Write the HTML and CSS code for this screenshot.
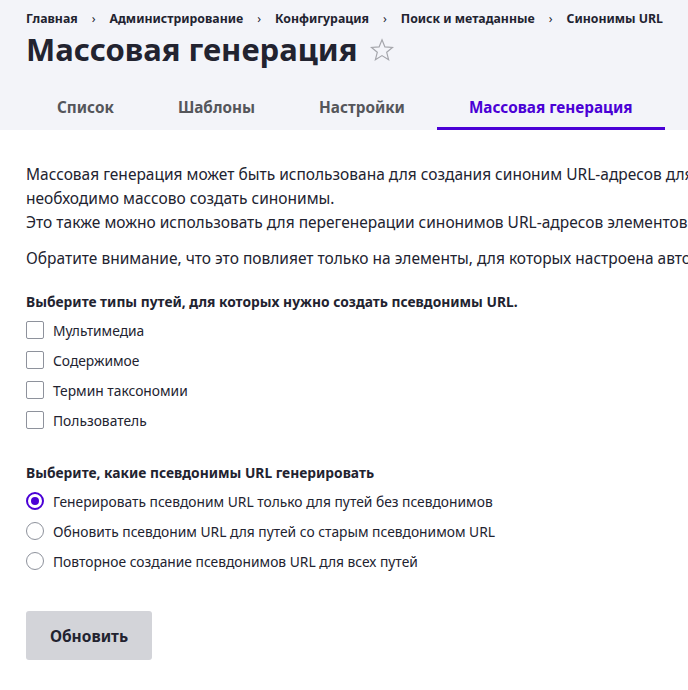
FILE: index.html
```html
<!DOCTYPE html>
<html lang="ru">
<head>
<meta charset="utf-8">
<title>Массовая генерация</title>
<link rel="stylesheet" href="styles.css">
</head>
<body>
<header class="page-header">
  <nav class="breadcrumb">
    <a href="#">Главная</a><span class="sep">›</span>
    <a href="#">Администрирование</a><span class="sep">›</span>
    <a href="#">Конфигурация</a><span class="sep">›</span>
    <a href="#">Поиск и метаданные</a><span class="sep">›</span>
    <a href="#">Синонимы URL</a>
  </nav>
  <div class="title-row">
    <h1 class="title">Массовая генерация</h1>
    <svg class="star" width="24" height="24" viewBox="0 0 24 24"><path d="M12 1.8l2.9 7.1 7.6.5-5.8 4.9 1.9 7.4L12 17.6l-6.6 4.1 1.9-7.4-5.8-4.9 7.6-.5z" fill="none" stroke="#a4a5ab" stroke-width="1.2" stroke-linejoin="miter"/></svg>
  </div>
  <nav class="tabs">
    <a class="tab" href="#">Список</a>
    <a class="tab" href="#">Шаблоны</a>
    <a class="tab" href="#">Настройки</a>
    <a class="tab active" href="#">Массовая генерация</a>
  </nav>
</header>
<main class="content">
  <div class="intro-block">
    <p class="intro">Массовая генерация может быть использована для создания синоним URL-адресов для элементов, которые существовали до настройки шаблона, или когда<br>необходимо массово создать синонимы.<br>Это также можно использовать для перегенерации синонимов URL-адресов элементов после изменения шаблонов.</p>
    <p class="intro">Обратите внимание, что это повлияет только на элементы, для которых настроена автоматическая генерация синонимов.</p>
  </div>

  <fieldset class="group">
    <legend class="group-title">Выберите типы путей, для которых нужно создать псевдонимы URL.</legend>
    <label class="option"><span class="checkbox"></span>Мультимедиа</label>
    <label class="option"><span class="checkbox"></span>Содержимое</label>
    <label class="option"><span class="checkbox"></span>Термин таксономии</label>
    <label class="option"><span class="checkbox"></span>Пользователь</label>
  </fieldset>

  <fieldset class="group">
    <legend class="group-title">Выберите, какие псевдонимы URL генерировать</legend>
    <label class="option"><span class="radio checked"></span>Генерировать псевдоним URL только для путей без псевдонимов</label>
    <label class="option"><span class="radio"></span>Обновить псевдоним URL для путей со старым псевдонимом URL</label>
    <label class="option"><span class="radio"></span>Повторное создание псевдонимов URL для всех путей</label>
  </fieldset>

  <button class="button" type="button">Обновить</button>
</main>
</body>
</html>
```

FILE: styles.css
```css
html, body {
  margin: 0;
  padding: 0;
  background: #ffffff;
}
body {
  font-family: "Noto Sans", "Open Sans", sans-serif;
  color: #222330;
  width: 688px;
  height: 690px;
  overflow: hidden;
}
a { text-decoration: none; color: inherit; }

.page-header {
  background: #f3f4f9;
  padding: 9px 0 0 26px;
  height: 121px;
  display: flex;
  flex-direction: column;
}
.breadcrumb {
  display: flex;
  align-items: center;
  font-size: 12.3px;
  font-weight: 700;
  line-height: 20px;
  white-space: nowrap;
}
.breadcrumb .sep {
  margin: 0 14px;
  font-weight: 400;
}
.title-row {
  display: flex;
  align-items: center;
  margin-top: -3px;
  height: 46px;
}
.title {
  margin: 0;
  font-size: 31px;
  font-weight: 700;
  line-height: 46px;
}
.star {
  margin-left: 12px;
  margin-top: 1px;
}
.tabs {
  display: flex;
  margin-top: auto;
  margin-left: -1px;
}
.tab {
  padding: 0 32px 8px;
  line-height: 24px;
  font-size: 15.3px;
  font-weight: 700;
  color: #55565b;
  border-bottom: 3px solid transparent;
}
.tab.active {
  color: #4a00d6;
  border-bottom-color: #4a00d6;
}

.content {
  padding: 0 26px;
}
.intro-block {
  padding-top: 32px;
}
.intro {
  margin: 0;
  font-size: 15.5px;
  line-height: 24px;
  white-space: nowrap;
}
.intro + .intro {
  margin-top: 12px;
}
.group {
  border: 0;
  padding: 0;
  margin: 22px 0 0;
  min-width: 0;
}
.group + .group {
  margin-top: 28px;
}
.group-title {
  padding: 0;
  font-size: 13.8px;
  font-weight: 700;
  line-height: 20px;
  margin-bottom: 3px;
  white-space: nowrap;
}
.option {
  display: flex;
  align-items: center;
  height: 30px;
  font-size: 13.8px;
  white-space: nowrap;
}
.checkbox {
  width: 18px;
  height: 18px;
  box-sizing: border-box;
  border: 1px solid #8e929c;
  border-radius: 2px;
  margin-right: 9px;
  background: #fff;
}
.radio {
  width: 18px;
  height: 18px;
  box-sizing: border-box;
  border: 1px solid #8e929c;
  border-radius: 50%;
  margin-right: 9px;
  background: #fff;
  position: relative;
}
.radio.checked {
  border: 2px solid #4a00d6;
}
.radio.checked::after {
  content: "";
  position: absolute;
  left: 3px;
  top: 3px;
  width: 8px;
  height: 8px;
  border-radius: 50%;
  background: #4a00d6;
}
.button {
  margin-top: 35px;
  display: block;
  width: 126px;
  height: 49px;
  border: 0;
  border-radius: 3px;
  background: #d3d4d9;
  color: #222330;
  font-family: inherit;
  font-size: 15.5px;
  font-weight: 700;
  padding: 0;
}
```
